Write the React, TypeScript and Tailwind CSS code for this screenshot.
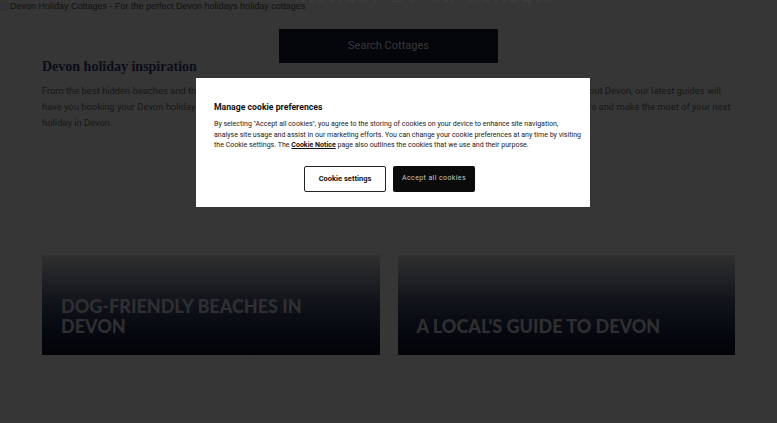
import { ImageOff } from 'lucide-react';

const guides = [
    { id: 'dog', title: 'Dog-friendly beaches in Devon' },
    { id: 'local', title: "A local's guide to Devon" },
];

export default function App() {
    return (
        <div className="relative min-h-[423px] w-full overflow-hidden bg-[#363636] font-['Roboto',sans-serif]">
            {/* header strip: broken logo + clipped title */}
            <div className="flex h-[14px] items-start">
                <div className="flex items-center gap-[1px] text-[9px] leading-[12px] text-[#111] font-['Liberation_Sans',Arial,sans-serif]">
                    <ImageOff className="h-[9px] w-[9px] text-[#2a2f3a]" strokeWidth={2} />
                    <span>Devon Holiday Cottages - For the perfect Devon holidays holiday cottages</span>
                </div>
                <div className="-mt-[15px] -ml-[6px] text-[20px] leading-[20px] text-[#3e3e3e] font-['Liberation_Serif',serif] tracking-[2.7px]">
                    Holiday Devon Cottages
                </div>
            </div>

            <div className="mt-[15px] flex justify-center">
                <button className="h-[34px] w-[219px] bg-[#05060b] text-[11px] text-[#38383c]">Search Cottages</button>
            </div>

            <div className="px-[42px]">
                <h2 className="mt-[-6px] text-[14px] font-bold leading-[20px] text-[#0b0d1a] font-['Liberation_Serif',serif]">Devon holiday inspiration</h2>
                <p className="mt-[6px] whitespace-nowrap text-[9.4px] leading-[16px] text-[#161616]">
                    From the best hidden beaches and the best places to eat out, to the top things to do and see, and everything you need to know all about Devon, our latest guides will
                    <br />
                    have you booking your Devon holiday in no time. Read on now to discover the very best of the coast, what to see and do, find out more and make the most of your next
                    <br />
                    holiday in Devon.
                </p>

                <div className="mt-[124px] grid grid-cols-2 gap-[18px]">
                    {guides.map((g) => (
                        <div key={g.id} className="flex h-[100px] items-end bg-gradient-to-b from-[#303030] via-[#10121a] to-[#020308] px-[19px] pb-[19px]">
                            <h3 className="w-[270px] text-[18px] font-black uppercase leading-[20px] text-[#2f2f31] font-['Lato',sans-serif]">{g.title}</h3>
                        </div>
                    ))}
                </div>
            </div>

            {/* cookie consent */}
            <div className="absolute left-[196px] top-[78px] w-[394px] bg-white px-[18px] pb-[15px] pt-[22px]">
                <h4 className="text-[8.7px] font-bold leading-[14px] text-[#111]">Manage cookie preferences</h4>
                <p className="mt-[5px] whitespace-nowrap text-[7.05px] leading-[10.5px] text-[#222]">
                    By selecting "Accept all cookies", you agree to the storing of cookies on your device to enhance site navigation,
                    <br />
                    analyse site usage and assist in our marketing efforts. You can change your cookie preferences at any time by visiting
                    <br />
                    the Cookie settings. The{' '}
                    <a className="font-bold underline text-[#111]">Cookie Notice</a> page also outlines the cookies that we use and their purpose.
                </p>
                <div className="ml-[90px] mt-[15px] flex gap-[7px]">
                    <button className="h-[26px] w-[82px] rounded-[2px] border border-[#222] bg-white text-[7.5px] font-bold text-[#111]">Cookie settings</button>
                    <button className="h-[26px] w-[82px] rounded-[2px] bg-[#0b0b0b] text-[7px] font-normal tracking-[0.4px] text-[#c8c8c8]">Accept all cookies</button>
                </div>
            </div>
        </div>
    );
}
